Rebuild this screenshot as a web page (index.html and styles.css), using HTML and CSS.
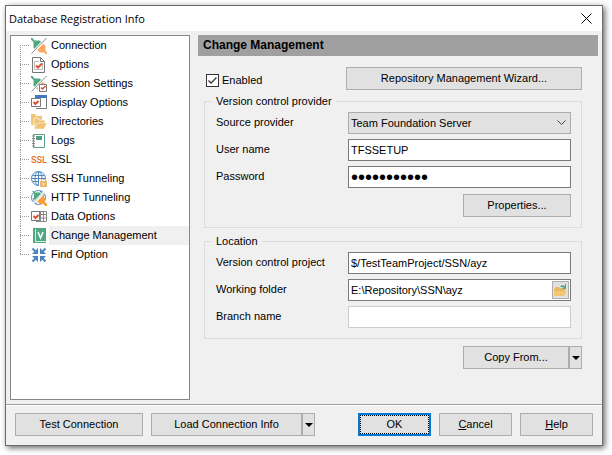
FILE: index.html
```html
<!DOCTYPE html>
<html lang="en">
<head>
    <meta charset="UTF-8">
    <meta name="viewport" content="width=device-width, initial-scale=1.0">
    <title>Database Registration Info</title>
    <link rel="stylesheet" href="styles.css">
</head>
<body>
    <div class="window">
        <header class="title-bar">
            <h1>Database Registration Info</h1>
            <button type="button" class="close" aria-label="Close">
                <svg width="11" height="11" viewBox="0 0 11 11"><path d="M.5 .5l10 10M10.5 .5l-10 10" stroke="#000" fill="none"/></svg>
            </button>
        </header>

        <div class="content">
            <!-- Sections -->
            <nav class="tree">
                <ul>
                    <li><a href="#connection">
                        <svg class="icon" viewBox="0 0 16 16"><path d="M0 0l1.500 0 2 2.500h5l2.500 2-7 7.500-1.500-2.500V4L0 1.500z" fill="#4fa882"/><path d="M6 12l6.500-6.500 2 3v4.500l1.500 1.500v1.500h-1.500L13 14.500H9z" fill="#f9a860"/><path d="M15.500 0L.5 15.500" stroke="#fff" stroke-width="2.500"/><path d="M15.500 0L.5 15.500" stroke="#8a8a8a"/></svg>
                        <span>Connection</span></a></li>
                    <li><a href="#options">
                        <svg class="icon" viewBox="0 0 16 16"><path d="M1.500 .5h8l4 4v11h-12z" fill="#fff" stroke="#777"/><path d="M9.500 .5v4h4" fill="none" stroke="#777"/><path d="M8 4.500H3.500v8h8V6" fill="none" stroke="#bbb"/><path d="M5 8.500l2 2 4-4" fill="none" stroke="#d9532f" stroke-width="2"/></svg>
                        <span>Options</span></a></li>
                    <li><a href="#session">
                        <svg class="icon" viewBox="0 0 16 16"><path d="M0 0l1.500 0 2 2.500h5l2.500 2-7 7.500-1.500-2.500V4L0 1.500z" fill="#4fa882"/><path d="M8 8l3-3 2.500 3zM5 12l2-2v4z" fill="#f9a860"/><path d="M15.500 0L.5 15.500" stroke="#fff" stroke-width="2.500"/><path d="M15.500 0L.5 15.500" stroke="#8a8a8a"/><path d="M8.500 8.500h7v7h-7z" fill="#fff" stroke="#777"/><path d="M10 11.500l1.500 1.500 3-3" fill="none" stroke="#d9532f" stroke-width="1.500"/></svg>
                        <span>Session Settings</span></a></li>
                    <li><a href="#display">
                        <svg class="icon" viewBox="0 0 16 16"><path d="M5 13.500h10.500V2" fill="none" stroke="#777"/><path d="M4 0h12v3H4z" fill="#3f78bd"/><path d="M.5 3.500h9v8h-9z" fill="#fff" stroke="#777"/><path d="M2.500 7l2 2 3-3" fill="none" stroke="#d9532f" stroke-width="2"/></svg>
                        <span>Display Options</span></a></li>
                    <li><a href="#directories">
                        <svg class="icon" viewBox="0 0 16 16"><path d="M0 0h4l1 2h6v4H4l-2 6-2-2z" fill="#efc475"/><path d="M3 12V4h4l1 2h6v4H6l-3 4z" fill="#efc475" stroke="#fff" stroke-width=".7"/><path d="M6 9h10l-3 6H3z" fill="#efc475" stroke="#fff" stroke-width=".5"/></svg>
                        <span>Directories</span></a></li>
                    <li><a href="#logs">
                        <svg class="icon" viewBox="0 0 16 16"><path d="M2.500 1.500h11v13h-11z" fill="#fff" stroke="#5ba287"/><path d="M5 3h6v4H5z" fill="#4f9f80"/><path d="M1 3h3M1 5.500h3M1 8h3M1 10.500h3M1 13h3" stroke="#888"/></svg>
                        <span>Logs</span></a></li>
                    <li><a href="#ssl">
                        <span class="icon ssl-icon" aria-hidden="true">SSL</span>
                        <span>SSL</span></a></li>
                    <li><a href="#ssh">
                        <svg class="icon" viewBox="0 0 16 16"><g fill="none" stroke="#5189bf"><circle cx="7.500" cy="7.500" r="7"/><ellipse cx="7.500" cy="7.500" rx="3.500" ry="7"/><path d="M7.500 .5v14M.5 7.500h14M1.500 4.500h12M1.500 10.500h12"/></g><path d="M8 8h8v8H8z" fill="#fff"/><path d="M9 10h7v6H9z" fill="#e5bd75"/><path d="M10.500 10V8.500h4V10" fill="none" stroke="#e5bd75"/><path d="M12 12h1v2h-1z" fill="#fff"/></svg>
                        <span>SSH Tunneling</span></a></li>
                    <li><a href="#http">
                        <svg class="icon" viewBox="0 0 16 16"><g fill="none" stroke="#5189bf"><circle cx="7.500" cy="7.500" r="7"/><path d="M9 1c3 2 4 4 3.500 6M6 14C3 12 2.500 10 2.500 8"/></g><path d="M1 1h1.500l1.500 1.500h5.500L10 4l-6 6.500-1-2V3.500z" fill="#4fa882"/><path d="M6 11.500L12 5.500l2 3V12l2 2v2h-2l-1.500-2H9z" fill="#f9a040"/><path d="M14 1.500L2 13.500" stroke="#fff" stroke-width="2"/><path d="M13 2.500L3 12.500" stroke="#9aa" stroke-width=".7"/></svg>
                        <span>HTTP Tunneling</span></a></li>
                    <li><a href="#data">
                        <svg class="icon" viewBox="0 0 16 16"><path d="M5 2.500h10.500v10H5M5 5.500h11M5 9h11M9.500 2v11M12.500 2v11" fill="none" stroke="#888"/><path d="M.5 2.500h8v9h-8z" fill="#fff" stroke="#777"/><path d="M2.500 7l2 2 3-3" fill="none" stroke="#d9532f" stroke-width="2"/></svg>
                        <span>Data Options</span></a></li>
                    <li><a href="#change" class="selected">
                        <svg class="icon" viewBox="0 0 16 16"><path d="M2 0h13v15H2z" fill="#4fa882"/><path d="M4.500 1v12.500M4 13.500h11" stroke="#d6ece3"/><path d="M7 4l2.500 6L12 4" fill="none" stroke="#fff" stroke-width="1.500"/></svg>
                        <span>Change Management</span></a></li>
                    <li><a href="#find">
                        <svg class="icon" viewBox="0 0 16 16"><path d="M1.500 1.500l4 4M14.500 1.500l-4 4M1.500 14.500l4-4M14.500 14.500l-4-4" stroke="#4d82bd" stroke-width="2"/><path d="M7 1v6H1l2-2h2V3zM9 1v6h6l-2-2h-2V3zM7 15V9H1l2 2h2v2zM9 15V9h6l-2 2h-2v2z" fill="#4d82bd"/></svg>
                        <span>Find Option</span></a></li>
                </ul>
            </nav>

            <!-- Change Management page -->
            <main class="panel">
                <h2>Change Management</h2>
                <form id="change-form" class="panel-form">
                    <div class="enable-row">
                        <label class="check"><input type="checkbox" checked>Enabled</label>
                        <button type="button" class="btn wizard">Repository Management Wizard...</button>
                    </div>

                    <fieldset>
                        <legend>Version control provider</legend>
                        <div class="fields">
                            <label for="provider">Source provider</label>
                            <select id="provider">
                                <option>Team Foundation Server</option>
                            </select>

                            <label for="user">User name</label>
                            <input type="text" id="user" value="TFSSETUP">

                            <label for="password">Password</label>
                            <input type="password" id="password" value="password123">
                        </div>
                        <button type="button" class="btn properties">Properties...</button>
                    </fieldset>

                    <fieldset>
                        <legend>Location</legend>
                        <div class="fields">
                            <label for="project">Version control project</label>
                            <input type="text" id="project" value="$/TestTeamProject/SSN/ayz">

                            <label for="folder">Working folder</label>
                            <div class="browse">
                                <input type="text" id="folder" value="E:\Repository\SSN\ayz">
                                <button type="button" aria-label="Browse">
                                    <svg width="13" height="13" viewBox="0 0 13 13"><path d="M1 3h4l1 1h5v4H1z" fill="#e9b864"/><path d="M0 12V4h1v5l2-2h10l-3 5z" fill="#f2c675"/><path d="M6 3c1-2 3-2 5-1V0h1v5H8l2-1c-1-1-2-1-4-1z" fill="#4fa882"/></svg>
                                </button>
                            </div>

                            <label for="branch">Branch name</label>
                            <input type="text" id="branch" disabled>
                        </div>
                    </fieldset>

                    <div class="split copy">
                        <button type="button" class="btn">Copy From...</button>
                        <button type="button" class="btn arrow" aria-label="Copy options"></button>
                    </div>
                </form>
            </main>
        </div>

        <footer class="actions">
            <button type="button" class="btn test">Test Connection</button>
            <div class="split load">
                <button type="button" class="btn">Load Connection Info</button>
                <button type="button" class="btn arrow" aria-label="Load options"></button>
            </div>
            <div class="dialog-buttons">
                <button type="submit" form="change-form" class="btn ok">OK</button>
                <button type="button" class="btn"><u>C</u>ancel</button>
                <button type="button" class="btn"><u>H</u>elp</button>
            </div>
        </footer>
    </div>
</body>
</html>
```
FILE: styles.css
```css
* {
    box-sizing: border-box;
}
body {
    margin: 0;
    padding: 5px 9px 9px 5px;
    min-height: 100vh;
    display: flex;
    background-color: #fff;
    color: #000;
    font: 11px/13px "Liberation Sans", Arial, sans-serif;
}
button, input, select {
    font: inherit;
    color: inherit;
    margin: 0;
}
.window {
    flex: 1;
    display: flex;
    flex-direction: column;
    border: 1px solid #6b6b6b;
    background-color: #f0f0f0;
    box-shadow: 2px 2px 6px rgba(0, 0, 0, 0.6);
}
.title-bar {
    display: flex;
    justify-content: space-between;
    align-items: center;
    height: 25px;
    padding: 0 10px 0 3px;
    background-color: #fff;
}
.title-bar h1 {
    margin: 0;
    font: 11px/16px "Open Sans", "Noto Sans", sans-serif;
}
.close {
    display: flex;
    padding: 0;
    border: none;
    background: none;
}
.content {
    flex: 1;
    display: flex;
    gap: 8px;
    padding: 4px;
}

/* Tree */
.tree {
    width: 180px;
    border: 1px solid #828790;
    background-color: #fff;
}
.tree ul {
    list-style: none;
    margin: 0;
    padding: 0 0 0 9px;
}
.tree li {
    height: 19px;
    background: repeating-linear-gradient(#999 0 1px, transparent 1px 2px) 0 0 / 1px 100% no-repeat,
        repeating-linear-gradient(90deg, #999 0 1px, transparent 1px 2px) 0 9px / 10px 1px no-repeat;
}
.tree li:first-child {
    background-position: 0 9px, 0 9px;
}
.tree li:last-child {
    background-size: 1px 9px, 10px 1px;
}
.tree a {
    display: flex;
    align-items: center;
    gap: 2px;
    height: 19px;
    padding-left: 11px;
    color: inherit;
    text-decoration: none;
}
.tree a span:last-child {
    flex: 1;
    padding: 3px 2px;
}
.tree a.selected span:last-child {
    background-color: #f0f0f0;
}
.icon {
    flex: none;
    width: 16px;
    height: 16px;
}
.ssl-icon {
    color: #dd6f28;
    font: 500 9px/16px Roboto, sans-serif;
}

/* Page */
.panel {
    flex: 1;
}
.panel h2 {
    margin: 0;
    padding: 4px 5px;
    background-color: #a0a0a0;
    font-size: 12px;
    line-height: 13px;
}
.panel-form {
    padding: 11px 16px 0 6px;
}
.enable-row {
    display: flex;
    justify-content: space-between;
    align-items: center;
    padding-left: 2px;
    margin-bottom: 5px;
}
.check {
    display: flex;
    align-items: center;
    gap: 3px;
    padding-top: 3px;
}
.check input {
    appearance: none;
    width: 13px;
    height: 13px;
    border: 1px solid #333;
    background: #fff;
}
.check input:checked {
    background: #fff url("data:image/svg+xml,%3Csvg xmlns='http://www.w3.org/2000/svg' viewBox='0 0 11 11'%3E%3Cpath d='M1.500 5.500l2.500 2.500 5.500-5.500' fill='none' stroke='%23333' stroke-width='1.300'/%3E%3C/svg%3E");
}
fieldset {
    margin: 0 0 7px;
    padding: 4px 10px 10px 11px;
    border: 1px solid #dcdcdc;
}
legend {
    margin-left: -4px;
    padding: 0 4px;
}
.fields {
    display: grid;
    grid-template-columns: 132px 1fr;
    align-items: center;
    row-gap: 5px;
}
.fields label {
    padding-bottom: 1px;
}
.fields input, .fields select, .browse {
    width: 100%;
    height: 22px;
    padding: 0 2px;
    border: 1px solid #7a7a7a;
    border-radius: 0;
    background-color: #fff;
}
.fields select {
    appearance: none;
    border-color: #adadad;
    background: #e1e1e1 url("data:image/svg+xml,%3Csvg xmlns='http://www.w3.org/2000/svg' width='9' height='6' viewBox='0 0 9 6'%3E%3Cpath d='M.5 .5l4 4 4-4' fill='none' stroke='%23444'/%3E%3C/svg%3E") right 4px center no-repeat;
}
.fields input:disabled {
    border-color: #ccc;
}
.fields input[type="password"] {
    font-size: 20px;
}
.fields .browse {
    display: flex;
    align-items: center;
    padding-right: 1px;
}
.fields .browse input {
    flex: 1;
    min-width: 0;
    height: 18px;
    padding: 0;
    border: none;
}
.browse button {
    display: flex;
    align-items: center;
    justify-content: center;
    width: 17px;
    height: 18px;
    padding: 0;
    border: 1px solid #adadad;
    background-color: #e1e1e1;
}

/* Buttons */
.btn {
    height: 23px;
    padding: 0 4px;
    border: 1px solid #adadad;
    border-radius: 0;
    background-color: #e1e1e1;
}
.wizard {
    width: 236px;
}
.properties {
    display: block;
    width: 108px;
    margin: 6px 0 0 auto;
}
.split {
    display: flex;
}
.split .btn:first-child {
    flex: 1;
}
.split .arrow {
    display: flex;
    align-items: center;
    justify-content: center;
    width: 13px;
    padding: 0;
}
.arrow::before {
    content: "";
    border: 4px solid transparent;
    border-top-color: #000;
    border-bottom: none;
}
.copy {
    width: 119px;
    margin-left: auto;
}
.actions {
    display: flex;
    gap: 8px;
    padding: 8px 9px 9px;
    border-top: 1px solid #a0a0a0;
    box-shadow: inset 0 1px #fff;
}
.test {
    width: 128px;
}
.load {
    width: 164px;
}
.dialog-buttons {
    display: flex;
    gap: 8px;
    margin-left: auto;
}
.dialog-buttons .btn {
    width: 73px;
}
.btn.ok {
    border: 2px solid #0078d7;
    outline: 1px dotted #000;
    outline-offset: -3px;
}
```
